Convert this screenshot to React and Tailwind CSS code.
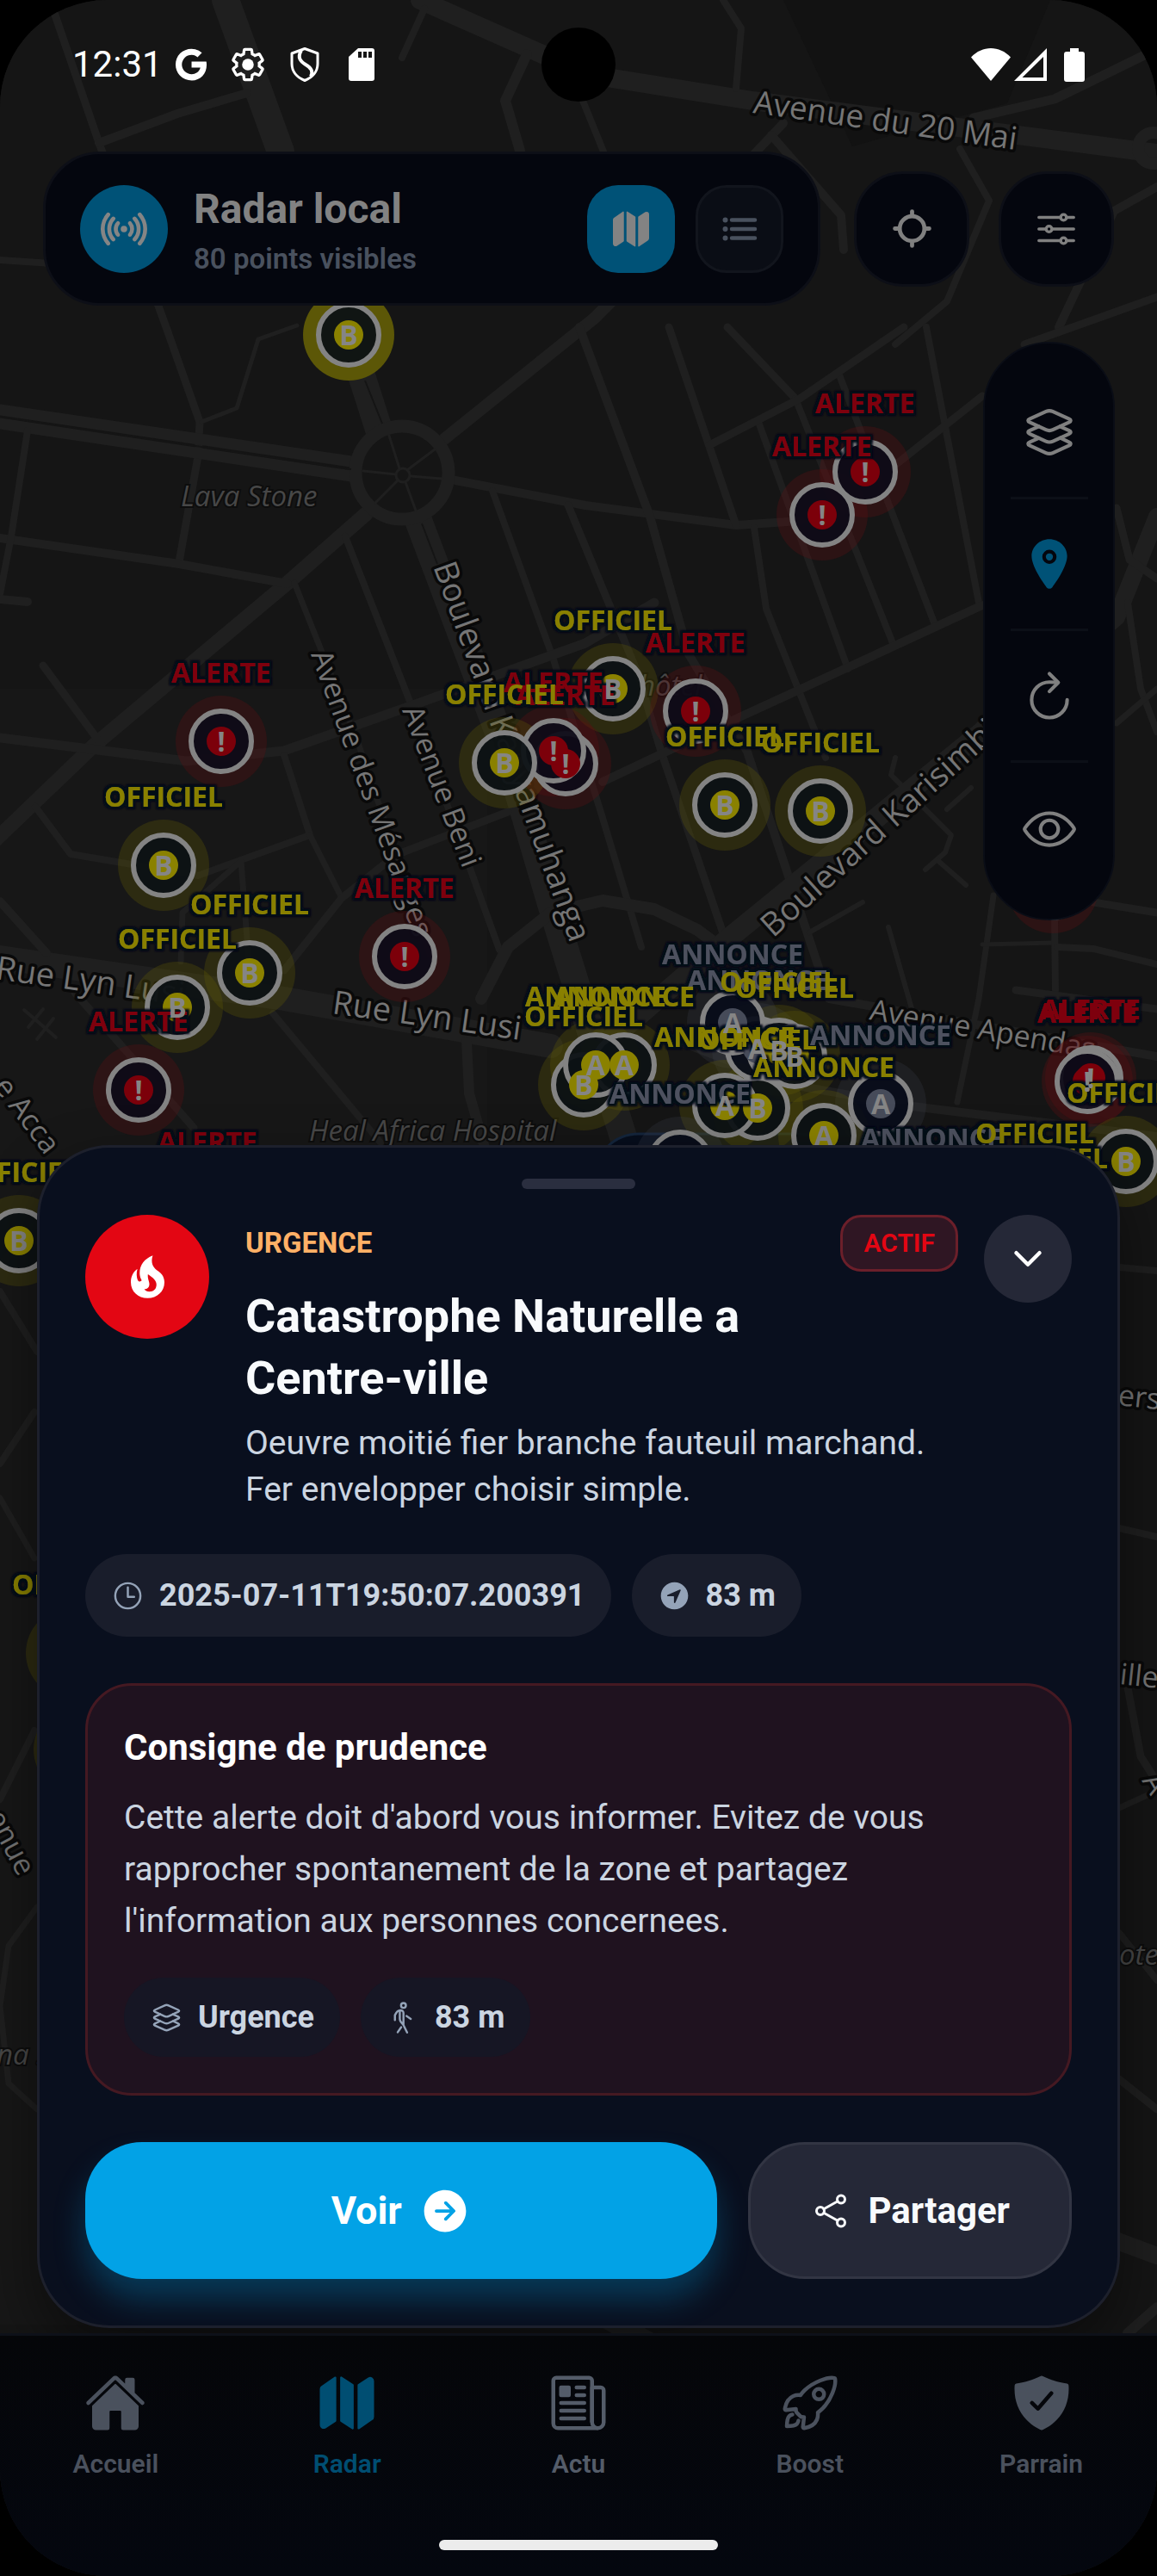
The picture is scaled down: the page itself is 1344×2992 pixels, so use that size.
import React from "react";
import {
  IoArrowForwardCircle,
  IoChevronDown,
  IoEyeOutline,
  IoHome,
  IoLayersOutline,
  IoList,
  IoLocate,
  IoLocation,
  IoLogoGoogle,
  IoMap,
  IoNavigateCircle,
  IoNewspaperOutline,
  IoOptionsOutline,
  IoRadio,
  IoRefreshOutline,
  IoRocketOutline,
  IoShareSocialOutline,
  IoShieldCheckmark,
  IoTimeOutline,
  IoWalkOutline,
} from "react-icons/io5";

/* ---------- Map data ---------- */

const ROADS = [
  [22, "488,0 630,63 686,87 874,117 1344,178"],
  [32, "262,0 326,176"],
  [9, "58,0 115,166 193,380 232,490 230,530 208,653"],
  [10, "115,166 206,132 287,108"],
  [8, "493,10 467,67"],
  [12, "612,63 587,117 604,175"],
  [8, "677,117 701,176"],
  [8, "840,0 861,33 855,103"],
  [11, "1344,57 1225,115 1131,137"],
  [10, "910,143 875,180"],
  [10, "896,157 977,250 980,290"],
  [8, "1115,173 1149,233 1100,350 1040,400"],
  [10, "1344,217 1294,245 1230,380"],
  [9, "1344,345 1190,400"],
  [8, "0,302 60,306"],
  [13, "0,476 408,536"],
  [13, "0,492 408,553"],
  [32, "405,389 442,505"],
  [32, "487,607 590,880 640,1050 730,1340"],
  [14, "516,510 690,370 760,300"],
  [10, "529,558 680,587 855,610 930,605"],
  [17, "425,597 334,677 110,865 -10,980"],
  [10, "0,625 208,655 334,678"],
  [8, "32,500 13,623 0,690"],
  [5, "234,490 275,474 300,394 345,378"],
  [8, "401,623 477,817 580,1103"],
  [7, "342,677 416,863 500,1110"],
  [8, "572,570 642,763 700,950 745,1100"],
  [9, "660,587 740,780 768,873 842,1090"],
  [9, "50,773 118,865"],
  [11, "0,857 217,884 330,872 477,820 680,747 760,700"],
  [10, "0,696 32,699"],
  [8, "41,937 82,992 230,1017 360,970 330,877"],
  [7, "360,970 397,1043"],
  [9, "330,1127 397,1043 460,993 590,943"],
  [7, "210,1117 212,1060 280,1000 290,1130"],
  [28, "0,1112 330,1160 640,1215"],
  [10, "0,1047 54,1107"],
  [9, "87,1153 225,1310"],
  [8, "317,1177 442,1327"],
  [12, "542,1210 545,1270 565,1340"],
  [14, "559,1160 590,1100 640,1060 700,1046 760,1056 810,1080 850,1110"],
  [10, "673,380 755,600 800,760 868,873 963,1160 1344,1227"],
  [9, "777,380 855,610"],
  [9, "845,380 924,463"],
  [8, "924,463 1037,747"],
  [8, "881,490 985,777"],
  [8, "974,433 1085,723"],
  [8, "1076,380 1137,700"],
  [9, "824,517 929,463 1050,380"],
  [9, "1040,540 1141,460"],
  [8, "876,613 890,707 959,880"],
  [10, "700,908 859,833 981,777 1141,703"],
  [24, "700,1215 850,1087 1141,850 1250,740"],
  [20, "1344,600 1297,717 1200,800"],
  [9, "1297,590 1312,650 1344,672"],
  [8, "1310,700 1325,800 1344,850"],
  [7, "1297,840 1344,800"],
  [6, "1040,880 1035,900 1105,970 1098,990 1075,1010"],
  [6, "1090,1000 1122,1028"],
  [6, "1128,915 1100,940"],
  [7, "1154,1040 1137,1160 1112,1280"],
  [5, "1141,1097 1225,1095"],
  [8, "1225,1070 1226,1150"],
  [8, "1228,1100 1270,1102 1344,1120"],
  [9, "1270,1048 1344,1060"],
  [9, "1180,1150 1344,1172"],
  [6, "1032,1077 1060,1175"],
  [6, "940,1083 1002,1048"],
  [10, "790,1210 920,1260 1060,1285 1344,1320"],
  [9, "0,1470 43,1420"],
  [8, "0,1500 43,1570"],
  [8, "0,1700 40,1640"],
  [7, "0,1740 40,1810"],
  [8, "0,2090 40,2010"],
  [7, "43,2215 10,2260 0,2330 10,2420 43,2450"],
  [8, "1300,1472 1344,1476"],
  [8, "1300,1775 1344,1785"],
  [9, "1310,1960 1325,2040 1344,2070"],
  [7, "1344,2080 1300,2100"],
  [8, "1300,2245 1344,2300"],
  [9, "1300,2415 1344,2450"],
  [20, "1290,2600 1344,2620"],
  [12, "1344,2680 1310,2710"],
  [24, "700,2690 770,2730"],
];

const TONES = {
  red: { dot: "#7c000a", halo: "#5c1014", text: "#7e000c" },
  yellow: { dot: "#8a8100", halo: "#5c5707", text: "#898000" },
  gray: { dot: "#464b59", halo: "#3a3f4c", text: "#4d515e" },
};

const POINTS = [
  ["yellow", "B", "", 405, 389],
  ["red", "!", "ALERTE", 1005, 548],
  ["red", "!", "ALERTE", 955, 598],
  ["red", "!", "ALERTE", 257, 861],
  ["yellow", "B", "OFFICIEL", 712, 800],
  ["red", "!", "ALERTE", 808, 826],
  ["red", "!", "ALERTE", 657, 887],
  ["red", "!", "ALERTE", 643, 872],
  ["yellow", "B", "OFFICIEL", 586, 886],
  ["yellow", "B", "OFFICIEL", 842, 935],
  ["yellow", "B", "OFFICIEL", 953, 942],
  ["yellow", "B", "OFFICIEL", 190, 1005],
  ["red", "!", "", 1223, 1031],
  ["red", "!", "ALERTE", 470, 1111],
  ["yellow", "B", "OFFICIEL", 290, 1130],
  ["yellow", "B", "OFFICIEL", 206, 1170],
  ["gray", "A", "ANNONCE", 880, 1218],
  ["yellow", "B", "OFFICIEL", 905, 1220],
  ["yellow", "B", "OFFICIEL", 923, 1227],
  ["gray", "A", "ANNONCE", 851, 1188],
  ["yellow", "B", "OFFICIEL", 678, 1260],
  ["yellow", "A", "ANNONCE", 725, 1237],
  ["yellow", "A", "ANNONCE", 692, 1237],
  ["red", "!", "ALERTE", 161, 1266],
  ["red", "!", "ALERTE", 1267, 1252],
  ["red", "!", "ALERTE", 1263, 1256],
  ["yellow", "B", "OFFICIEL", 880, 1287],
  ["yellow", "A", "ANNONCE", 842, 1284],
  ["gray", "A", "ANNONCE", 1023, 1282],
  ["yellow", "A", "ANNONCE", 957, 1319],
  ["gray", "A", "ANNONCE", 790, 1350],
  ["gray", "A", "ANNONCE", 1082, 1402],
  ["yellow", "B", "OFFICIEL", 1202, 1396],
  ["yellow", "B", "OFFICIEL", 1218, 1425],
  ["yellow", "B", "OFFICIEL", 1308, 1349],
  ["red", "!", "ALERTE", 241, 1406],
  ["yellow", "B", "OFFICIEL", 22, 1441],
  ["yellow", "B", "OFFICIEL", 83, 1920],
  ["yellow", "B", "", 92, 2032],
];

const STREETS = [
  ["Avenue du 20 Mai", 874, 131, 8, 37],
  ["Boulevard Kanyamuhanga", 503, 658, 70, 38],
  ["Avenue des Mésanges", 361, 760, 70, 34],
  ["Avenue Beni", 467, 825, 69, 34],
  ["Rue Lyn Lusi", -6, 1137, 8, 38],
  ["Rue Lyn Lusi", 385, 1177, 8, 38],
  ["Boulevard Karisimbi", 898, 1090, -42, 38],
  ["Avenue Apendas", 1009, 1184, 10, 34],
  ["e Acca", -8, 1262, 53, 34],
  ["enue", -16, 2110, 62, 34],
  ["ers", 1298, 1632, 6, 34],
  ["ille", 1300, 1956, 6, 34],
  ["A", 1326, 2068, 60, 34],
];

const PLACES = [
  ["Lava Stone", 210, 588],
  ["Heal Africa Hospital", 359, 1325],
  ["hôtel", 742, 808],
  ["ote", 1300, 2282],
  ["na .", -4, 2398],
];

function MapCanvas() {
  return (
    <svg
      aria-hidden="true"
      className="absolute inset-0 h-full w-full"
      viewBox="0 0 1344 2992"
      preserveAspectRatio="xMidYMin slice"
    >
      <defs>
        <filter id="label-outline" filterUnits="userSpaceOnUse" x="0" y="0" width="1344" height="2992">
          <feMorphology in="SourceAlpha" operator="dilate" radius="3" result="wide" />
          <feGaussianBlur in="wide" stdDeviation="1" result="soft" />
          <feFlood floodColor="#040917" />
          <feComposite in2="soft" operator="in" result="outline" />
          <feMerge>
            <feMergeNode in="outline" />
            <feMergeNode in="SourceGraphic" />
          </feMerge>
        </filter>
      </defs>
      <rect width="1344" height="2992" fill="#151515" />
      <rect y="800" width="566" height="1900" fill="#171717" />
      <path d="M910 0 H1220 L1170 120 L990 170 Z" fill="#121212" />
      <g fill="none" stroke="#1f1f1f" strokeLinejoin="round" strokeLinecap="round">
        {ROADS.map(([w, pts]) => (
          <polyline key={pts} points={pts} strokeWidth={w} />
        ))}
        <circle cx="467" cy="549" r="54" strokeWidth="15" fill="#151515" />
        <circle cx="468" cy="552" r="8" strokeWidth="3" />
        <path
          d="M464 544 L452 506 M473 546 L505 522 M477 553 L514 556 M471 560 L483 593 M462 558 L436 584 M460 551 L422 547"
          strokeWidth="3"
        />
        <circle cx="1340" cy="172" r="18" strokeWidth="14" />
        <path d="M28 1173 L65 1205 M50 1172 L33 1193 M62 1183 L43 1207" strokeWidth="4" />
      </g>
      <path d="M0 484 L408 545 M424 442 L444 492 M490 608 L508 655" stroke="#151515" strokeWidth="2" />

      <g
        fontFamily="'Open Sans', sans-serif"
        fill="#757575"
        stroke="#090909"
        strokeWidth="7"
        strokeLinejoin="round"
        paintOrder="stroke"
      >
        {STREETS.map(([name, x, y, angle, size]) => (
          <text key={name + x} fontSize={size} transform={`translate(${x} ${y}) rotate(${angle})`}>
            {name}
          </text>
        ))}
      </g>
      <g
        fontFamily="'Open Sans', sans-serif"
        fontStyle="italic"
        fontSize="33"
        fill="#474747"
        stroke="#0d0d0d"
        strokeWidth="4"
        paintOrder="stroke"
      >
        {PLACES.map(([name, x, y]) => (
          <text key={name} x={x} y={y}>
            {name}
          </text>
        ))}
      </g>

      <rect x="690" y="1317" width="290" height="120" rx="52" fill="#060d1c" stroke="#14253c" strokeWidth="3" />

      {POINTS.map(([tone, , , x, y]) => (
        <circle
          key={`halo-${x}-${y}`}
          cx={x}
          cy={y}
          r="53"
          fill={TONES[tone].halo}
          opacity={y === 389 ? 1 : tone === "gray" ? 0.25 : 0.32}
        />
      ))}
      {POINTS.map(([tone, , , x, y]) => (
        <circle
          key={`ring-${x}-${y}`}
          cx={x}
          cy={y}
          r="35"
          fill={tone === "red" ? "#0e0b17" : tone === "yellow" ? "#0c1114" : "#080d19"}
          fillOpacity="0.94"
          stroke="#838383"
          strokeWidth="6"
        />
      ))}
      {POINTS.map(([tone, , , x, y]) => (
        <circle key={`dot-${x}-${y}`} cx={x} cy={y} r="17" fill={TONES[tone].dot} />
      ))}
      <g
        fontFamily="'Open Sans', sans-serif"
        fontWeight="700"
        fontSize="32"
        textAnchor="middle"
        filter="url(#label-outline)"
      >
        {POINTS.map(([tone, , label, x, y]) => (
          <text key={`label-${x}-${y}`} x={x} y={y - 68} fill={TONES[tone].text}>
            {label}
          </text>
        ))}
      </g>
      <g fontFamily="'Open Sans', sans-serif" fontWeight="700" fontSize="32" textAnchor="middle" fill="#858585">
        {POINTS.map(([, letter, , x, y]) => (
          <text key={`letter-${x}-${y}`} x={x} y={y + 12}>
            {letter}
          </text>
        ))}
      </g>
    </svg>
  );
}

/* ---------- Small drawings ---------- */

function GearIcon() {
  return (
    <svg viewBox="0 0 24 24" className="size-11" aria-hidden="true">
      <path
        fill="none"
        stroke="currentColor"
        strokeWidth="1.8"
        d="M19.14 12.94c.04-.3.06-.61.06-.94 0-.32-.02-.64-.07-.94l2.03-1.58c.18-.14.23-.41.12-.61l-1.92-3.32c-.12-.22-.37-.29-.59-.22l-2.39.96c-.5-.38-1.03-.7-1.62-.94l-.36-2.54c-.04-.24-.24-.41-.48-.41h-3.84c-.24 0-.43.17-.47.41l-.36 2.54c-.59.24-1.13.57-1.62.94l-2.39-.96c-.22-.08-.47 0-.59.22L2.74 8.87c-.12.21-.08.47.12.61l2.03 1.58c-.05.3-.09.63-.09.94s.02.64.07.94l-2.03 1.58c-.18.14-.23.41-.12.61l1.92 3.32c.12.22.37.29.59.22l2.39-.96c.5.38 1.03.7 1.62.94l.36 2.54c.05.24.24.41.48.41h3.84c.24 0 .44-.17.47-.41l.36-2.54c.59-.24 1.13-.56 1.62-.94l2.39.96c.22.08.47 0 .59-.22l1.92-3.32c.12-.22.07-.47-.12-.61l-2.01-1.58z"
      />
      <circle cx="12" cy="12" r="3.7" fill="currentColor" />
    </svg>
  );
}

function ShieldIcon() {
  return (
    <svg viewBox="0 0 36 42" className="h-[42px] w-9" fill="none" stroke="currentColor" strokeWidth="3" aria-hidden="true">
      <path d="M18 2.5 L33 8 V20 C33 29 27 36 18 39.5 C9 36 3 29 3 20 V8 Z" strokeLinejoin="round" />
      <path d="M14 4.5 C9 13 13 17 19 21 C26 25 28 29 25 35" strokeWidth="4" />
    </svg>
  );
}

function SdCardIcon() {
  return (
    <svg viewBox="0 0 30 38" className="h-[38px] w-[30px]" aria-hidden="true">
      <path d="M11 0 H27 a3 3 0 0 1 3 3 V35 a3 3 0 0 1 -3 3 H3 a3 3 0 0 1 -3 -3 V10 Z" fill="currentColor" />
      <path d="M11 4 h4 v7 h-4z M17 4 h4 v7 h-4z M23 4 h4 v7 h-4z" fill="#171717" />
    </svg>
  );
}

function WifiIcon() {
  return (
    <svg viewBox="0 0 46 38" className="h-[38px] w-[46px]" fill="currentColor" aria-hidden="true">
      <path d="M23 38 L0 10.5 C13 -3.5 33 -3.5 46 10.5 Z" />
    </svg>
  );
}

function SignalIcon() {
  return (
    <svg viewBox="0 0 38 38" className="size-[38px]" aria-hidden="true">
      <path d="M38 0 V38 H0 Z M34 10 L9.5 34 H34 Z" fill="currentColor" fillRule="evenodd" />
    </svg>
  );
}

function BatteryIcon() {
  return (
    <svg viewBox="0 0 24 39" className="ml-4 h-[39px] w-6" fill="currentColor" aria-hidden="true">
      <path d="M7 0 H17 V4 H21 a3 3 0 0 1 3 3 V36 a3 3 0 0 1 -3 3 H3 a3 3 0 0 1 -3 -3 V7 a3 3 0 0 1 3 -3 H7 Z" />
    </svg>
  );
}

function FlameIcon() {
  return (
    <svg viewBox="0 0 118 150" className="h-[50px] w-[39px]" fill="currentColor" aria-hidden="true">
      <path
        fillRule="evenodd"
        d="M77 0 C48 12 31 32 31 62 C31 72 34 80 38 87 C35 93 27 93 24 86 C20 76 19 62 23 47 C8 58 0 74 0 94 C0 127 25 150 59 150 C92 150 118 127 118 94 C118 71 104 60 92 52 C77 41 69 24 77 0 Z M60 66 C78 78 90 88 90 102 C90 118 80 127 65 127 C57 127 51 124 47 119 C58 118 65 112 65 101 C65 90 58 82 60 66 Z"
      />
    </svg>
  );
}

/* ---------- Screen parts ---------- */

function StatusBar() {
  return (
    <div className="grid h-[150px] grid-cols-3 items-center px-[84px] text-white">
      <div className="flex items-center">
        <span className="text-[42px] leading-[48px]">12:31</span>
        <div className="grid grid-cols-4 items-center justify-items-center">
          <span className="flex w-[66px] justify-center">
            <IoLogoGoogle className="size-[42px]" aria-hidden="true" />
          </span>
          <GearIcon />
          <ShieldIcon />
          <SdCardIcon />
        </div>
      </div>
      <div className="size-[86px] justify-self-center rounded-full bg-black" />
      <div className="flex items-center gap-1 justify-self-end">
        <WifiIcon />
        <SignalIcon />
        <BatteryIcon />
      </div>
    </div>
  );
}

function Header() {
  return (
    <header className="mt-[26px] flex items-center gap-[39px] px-[50px]">
      <div className="flex h-[179px] flex-1 items-center rounded-[66px] border-[3px] border-[#0d0f17] bg-[#04060e] px-10">
        <div className="flex size-[102px] items-center justify-center rounded-full bg-[#005277] text-[#858585]">
          <IoRadio className="size-[54px]" aria-hidden="true" />
        </div>
        <div className="ml-[30px] flex-1 pt-[6px]">
          <h1 className="text-[48px] leading-[60px] font-bold text-[#828282]">Radar local</h1>
          <p className="mt-1 text-[33px] leading-[48px] font-semibold text-[#49515e]">80 points visibles</p>
        </div>
        <div className="flex gap-6">
          <button
            type="button"
            aria-label="Carte"
            className="flex size-[102px] items-center justify-center rounded-[36px] bg-[#005277] text-[#838383]"
          >
            <IoMap className="size-12" />
          </button>
          <button
            type="button"
            aria-label="Liste"
            className="flex size-[102px] items-center justify-center rounded-[36px] border-[3px] border-[#12151d] bg-[#0a0d15] text-[#49515e]"
          >
            <IoList className="size-12" />
          </button>
        </div>
      </div>
      <div className="flex gap-[34px]">
        <button
          type="button"
          aria-label="Me localiser"
          className="flex size-[134px] items-center justify-center rounded-[57px] border-[3px] border-[#0d0f17] bg-[#04060e] text-[#808080]"
        >
          <IoLocate className="size-[51px]" />
        </button>
        <button
          type="button"
          aria-label="Filtres"
          className="flex size-[134px] items-center justify-center rounded-[57px] border-[3px] border-[#0d0f17] bg-[#04060e] text-[#808080]"
        >
          <IoOptionsOutline className="size-[54px]" />
        </button>
      </div>
    </header>
  );
}

const TOOLS = [
  ["Calques", IoLayersOutline, "text-[#808080]"],
  ["Points", IoLocation, "text-[#005277]"],
  ["Actualiser", IoRefreshOutline, "text-[#808080]"],
  ["Visibilité", IoEyeOutline, "text-[#808080]"],
];

function Toolbar() {
  return (
    <div className="mt-[42px] mr-[49px] flex w-[153px] flex-col items-center divide-y-3 divide-[#0c0f17] self-end rounded-full border-2 border-[#0a0d16] bg-[#04060e] py-[28px]">
      {TOOLS.map(([label, Icon, color]) => (
        <button
          key={label}
          type="button"
          aria-label={label}
          className={`flex h-[153px] w-[90px] items-center justify-center ${color}`}
        >
          <Icon className="size-[66px]" />
        </button>
      ))}
    </div>
  );
}

function Chip({ icon: Icon, children, dark }) {
  return (
    <span
      className={`flex items-center gap-[17px] rounded-full px-[30px] text-[36px] leading-[48px] font-bold text-[#cbd5e1] ${
        dark ? "bg-[#161624] py-[22px]" : "bg-[#191d2b] py-6"
      }`}
    >
      <Icon className="size-[39px] text-[#94a3b8]" aria-hidden="true" />
      {children}
    </span>
  );
}

function Sheet() {
  return (
    <section className="mx-[43px] rounded-[84px] border-[3px] border-[#1d202c] bg-[#090f1e] px-[53px] pt-9 pb-[54px] shadow-[0_30px_70px_rgba(0,0,0,0.45)]">
      <div className="mx-auto h-3 w-[132px] rounded-full bg-[#2a2e3f]" />

      <div className="mt-[30px] flex items-start">
        <div className="flex size-[144px] shrink-0 items-center justify-center rounded-full bg-[#e30613] text-white">
          <FlameIcon />
        </div>
        <div className="ml-[42px] flex-1">
          <div className="flex items-center justify-between">
            <span className="text-[33px] leading-[42px] font-bold text-[#ffb066]">URGENCE</span>
            <span className="rounded-3xl border-[3px] border-[#6b1f2a] bg-[#2f1623] px-6 py-[9px] text-[30px] leading-[42px] font-semibold text-[#e30613]">
              ACTIF
            </span>
          </div>
          <h2 className="mt-4 text-[54px] leading-[72px] font-bold text-[#f8fafc]">
            Catastrophe Naturelle a <span className="inline-block">Centre-ville</span>
          </h2>
          <p className="mt-3 text-[39px] leading-[54px] text-[#cbd5e1]">
            Oeuvre moitié fier branche fauteuil marchand. Fer envelopper choisir simple.
          </p>
        </div>
        <button
          type="button"
          aria-label="Réduire"
          className="ml-[30px] flex size-[102px] shrink-0 items-center justify-center rounded-full bg-[#252837] text-white"
        >
          <IoChevronDown className="size-12" />
        </button>
      </div>

      <div className="mt-12 flex flex-wrap gap-6">
        <Chip icon={IoTimeOutline}>2025-07-11T19:50:07.200391</Chip>
        <Chip icon={IoNavigateCircle}>83 m</Chip>
      </div>

      <div className="mt-[54px] rounded-[54px] border-[3px] border-[#451922] bg-[#1f121f] px-[42px] pt-[45px] pb-[42px]">
        <h3 className="text-[42px] leading-[54px] font-bold text-white">Consigne de prudence</h3>
        <p className="mt-6 text-[39px] leading-[60px] text-[#cbd5e1]">
          Cette alerte doit d'abord vous informer. Evitez de vous rapprocher spontanement de la zone et partagez
          l'information aux personnes concernees.
        </p>
        <div className="mt-9 flex flex-wrap gap-6">
          <Chip icon={IoLayersOutline} dark>
            Urgence
          </Chip>
          <Chip icon={IoWalkOutline} dark>
            83 m
          </Chip>
        </div>
      </div>

      <div className="mt-[54px] flex gap-9">
        <button
          type="button"
          className="flex h-[159px] flex-1 items-center justify-center gap-5 rounded-[66px] bg-[#02a2e6] text-[45px] leading-[54px] font-bold text-white shadow-[0_24px_36px_rgba(2,162,230,0.28)]"
        >
          Voir
          <IoArrowForwardCircle className="size-[60px]" aria-hidden="true" />
        </button>
        <button
          type="button"
          className="flex h-[159px] items-center justify-center gap-5 rounded-[66px] border-[3px] border-[#323543] bg-[#252837] px-[69px] text-[42px] leading-[54px] font-bold text-[#f8fafc]"
        >
          <IoShareSocialOutline className="size-12" aria-hidden="true" />
          Partager
        </button>
      </div>
    </section>
  );
}

const TABS = [
  ["Accueil", IoHome, "text-[#4a515d]"],
  ["Radar", IoMap, "text-[#004e72]"],
  ["Actu", IoNewspaperOutline, "text-[#545c69]"],
  ["Boost", IoRocketOutline, "text-[#4a515d]"],
  ["Parrain", IoShieldCheckmark, "text-[#4a515d]"],
];

function BottomNav() {
  return (
    <nav className="mt-[6px] border-t-[3px] border-[#0e1119] bg-[#04070f] bg-linear-to-b from-[#050609] to-[#04070f] pt-[42px] pb-[30px]">
      <div className="grid grid-cols-5">
        {TABS.map(([label, Icon, color]) => (
          <a key={label} href="#" className={`flex flex-col items-center gap-[15px] ${color}`}>
            <Icon className="size-[72px]" aria-hidden="true" />
            <span className="text-[30px] leading-10 font-semibold">{label}</span>
          </a>
        ))}
      </div>
      <div className="mx-auto mt-[68px] h-3 w-[324px] rounded-full bg-[#ececec]" />
    </nav>
  );
}

export default function App() {
  return (
    <div className="min-h-screen bg-black font-[Roboto,sans-serif]">
      <main className="relative isolate flex min-h-screen flex-col overflow-hidden rounded-[124px] bg-[#151515]">
        <div className="absolute inset-0 -z-10">
          <MapCanvas />
        </div>
        <StatusBar />
        <Header />
        <Toolbar />
        <div className="flex-1" />
        <Sheet />
        <BottomNav />
      </main>
    </div>
  );
}
